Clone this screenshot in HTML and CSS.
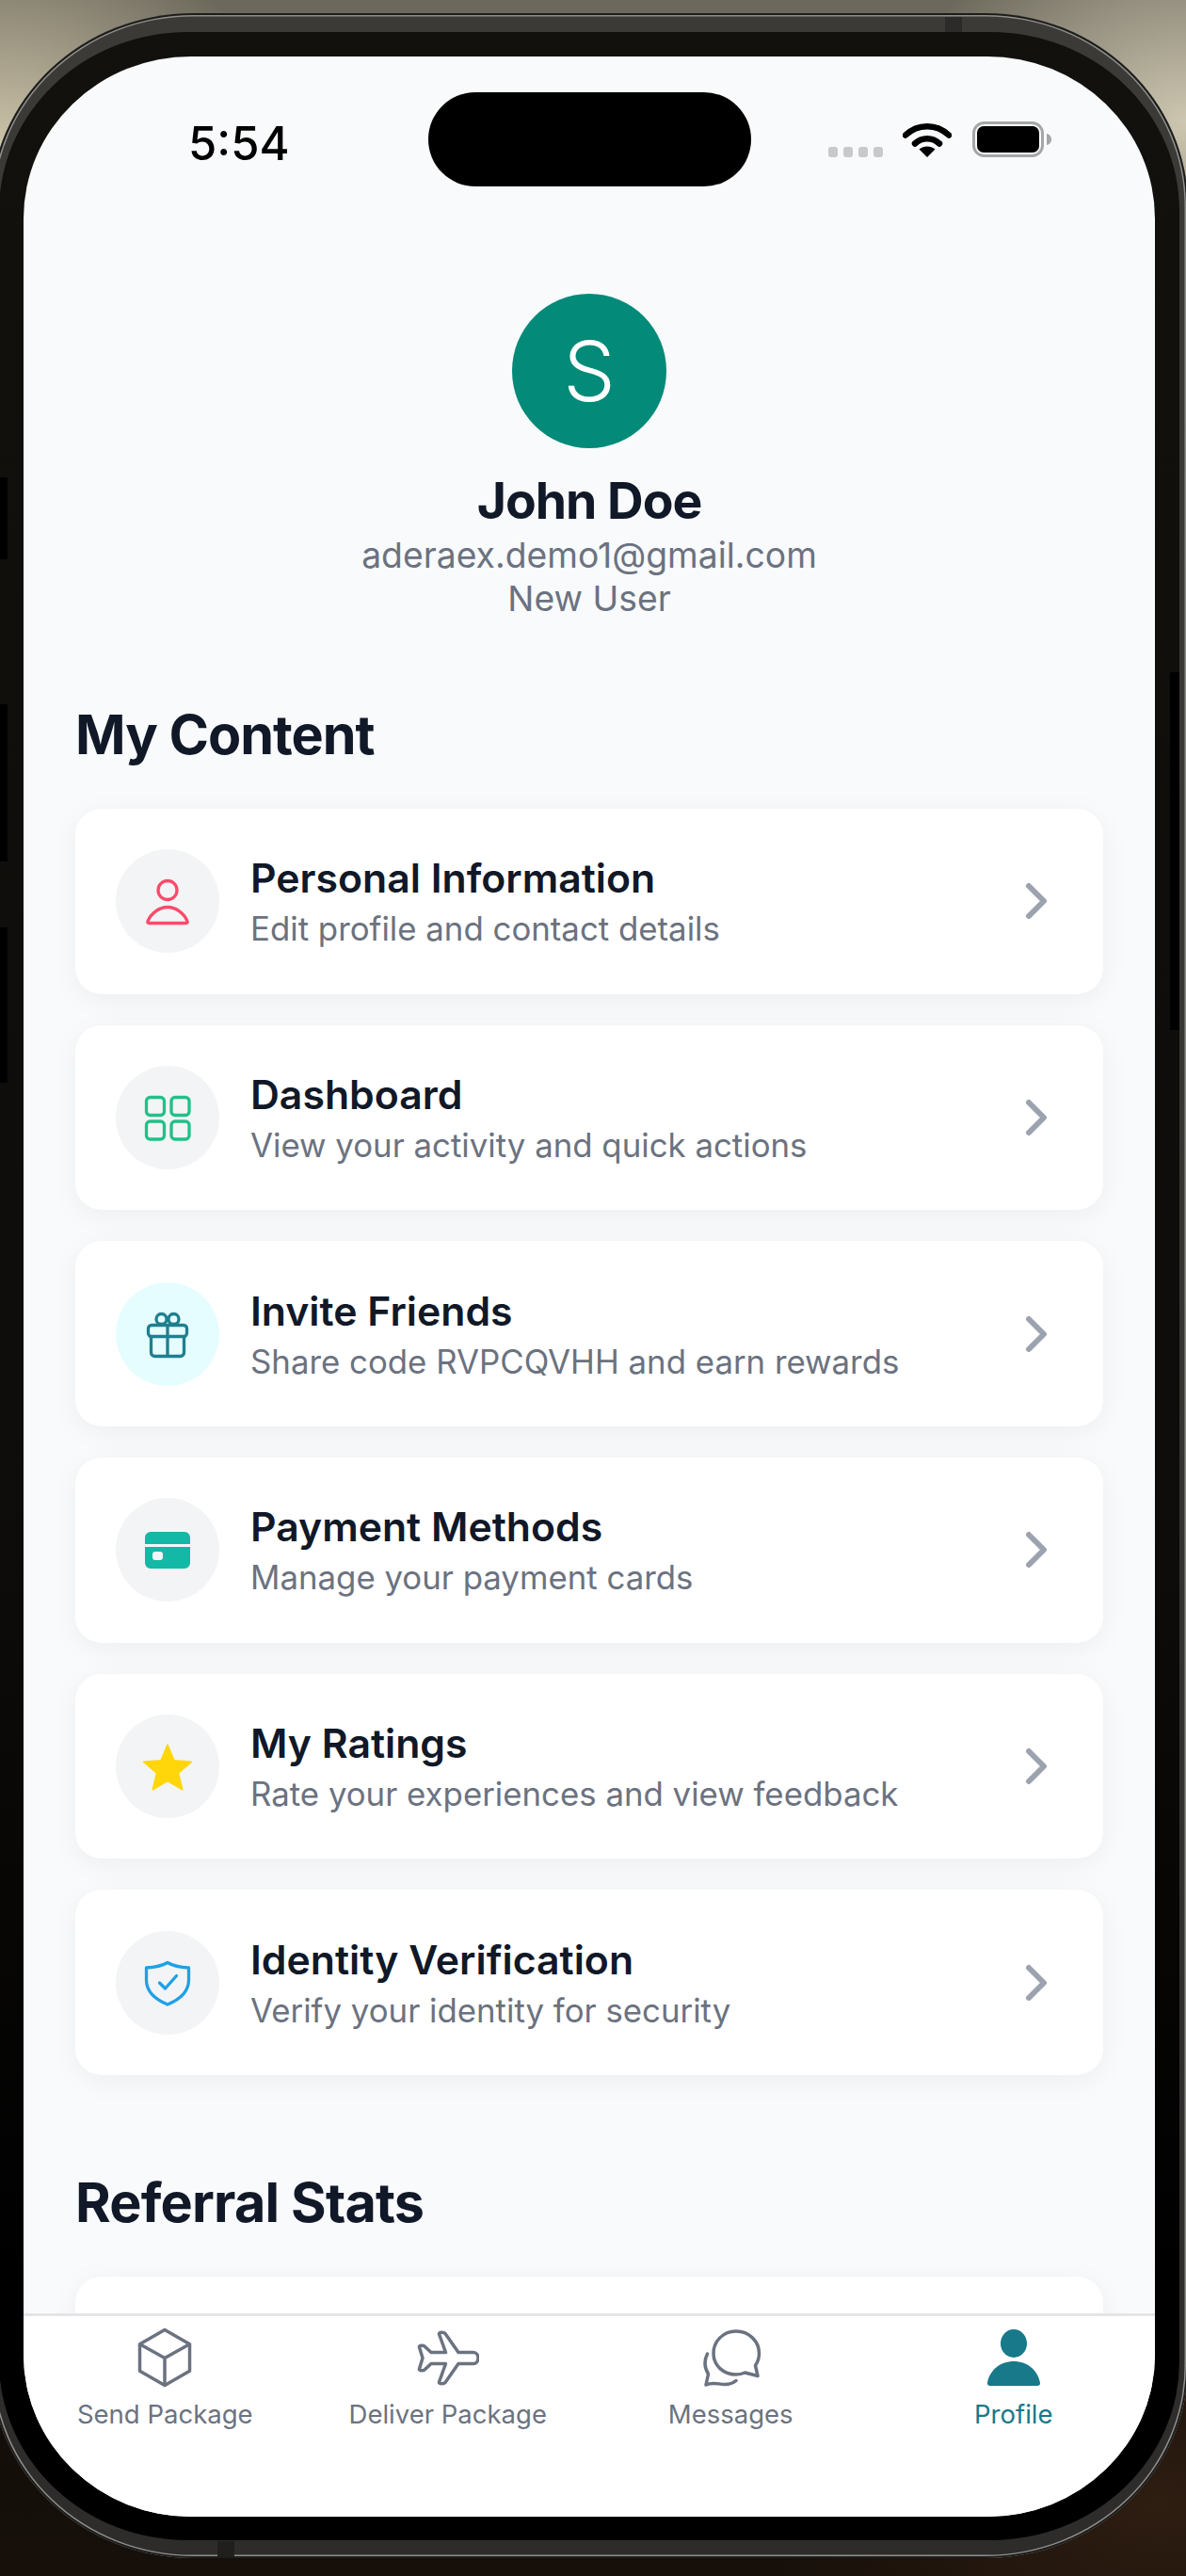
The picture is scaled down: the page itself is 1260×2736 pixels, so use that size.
FILE: index.html
```html
<!DOCTYPE html>
<html lang="en">
<head>
<meta charset="utf-8">
<title>Profile</title>
<link rel="stylesheet" href="styles.css">
</head>
<body>
<div class="stage">
  <div class="phone">
    <span class="tick tick-top"></span>
    <span class="tick tick-bottom"></span>
    <span class="btn btn-a"></span>
    <span class="btn btn-b"></span>
    <span class="btn btn-c"></span>
    <span class="btn btn-d"></span>
    <div class="bezel">
      <div class="screen">
        <div class="island"></div>
        <header class="status">
          <span class="time">5:54</span>
          <div class="status-right">
            <div class="dots"><i></i><i></i><i></i><i></i></div>
            <svg class="wifi" viewBox="0 0 52 38" width="52" height="38"><path d="M3 14.5C16 2 36 2 49 14.5" fill="none" stroke="#000" stroke-width="6.5" stroke-linecap="round"/><path d="M13 23.5C20.5 16.5 31.5 16.5 39 23.5" fill="none" stroke="#000" stroke-width="6.5" stroke-linecap="round"/><path d="M26 38l-8.500-8.500c5-4 12-4 17 0z" fill="#000"/></svg>
            <svg class="battery" viewBox="0 0 84 38" width="84" height="38"><rect x="1.500" y="1.500" width="73" height="35" rx="11" fill="none" stroke="#a6a6a6" stroke-width="3"/><rect x="5" y="5" width="66" height="28" rx="7" fill="#000"/><path d="M79 13c3 .5 5 3 5 6s-2 5.500-5 6z" fill="#a6a6a6"/></svg>
          </div>
        </header>
        <main class="scroll">
          <section class="profile">
            <div class="avatar">S</div>
            <h1 class="name">John Doe</h1>
            <p class="meta">aderaex.demo1@gmail.com</p>
            <p class="meta">New User</p>
          </section>
          <h2 class="section-title">My Content</h2>
          <div class="list">
            <article class="card">
              <div class="icon">
                <svg viewBox="0 0 66 66" width="66" height="66"><circle cx="33" cy="21.500" r="10" class="st st-rose"/><path d="M13.500 56.500h39c1.500 0 2-1 1.500-2.200C50.500 46 42 39.500 33 39.500S15.500 46 12 54.300c-.5 1.200 0 2.200 1.500 2.200z" class="st st-rose"/></svg>
              </div>
              <div class="text"><h3>Personal Information</h3><p>Edit profile and contact details</p></div>
              <svg class="chev" viewBox="0 0 24 40" width="24" height="40"><path d="M4 4l16 16L4 36"/></svg>
            </article>
            <article class="card">
              <div class="icon">
                <svg viewBox="0 0 66 66" width="66" height="66"><g class="st st-green"><rect x="10.500" y="11.500" width="19" height="19" rx="4"/><rect x="37" y="11.500" width="19" height="19" rx="4"/><rect x="10.500" y="37" width="19" height="19" rx="4"/><rect x="37" y="37" width="19" height="19" rx="4"/></g></svg>
              </div>
              <div class="text"><h3>Dashboard</h3><p>View your activity and quick actions</p></div>
              <svg class="chev" viewBox="0 0 24 40" width="24" height="40"><path d="M4 4l16 16L4 36"/></svg>
            </article>
            <article class="card">
              <div class="icon icon-cyan">
                <svg viewBox="0 0 66 66" width="66" height="66"><g class="st st-teal"><circle cx="26.500" cy="17" r="5.500"/><circle cx="39.500" cy="17" r="5.500"/><rect x="12.500" y="23.500" width="41" height="12" rx="3.500"/><path d="M15.500 35.500v17a4 4 0 0 0 4 4h27a4 4 0 0 0 4-4v-17M33 23.500v33"/></g></svg>
              </div>
              <div class="text"><h3>Invite Friends</h3><p>Share code RVPCQVHH and earn rewards</p></div>
              <svg class="chev" viewBox="0 0 24 40" width="24" height="40"><path d="M4 4l16 16L4 36"/></svg>
            </article>
            <article class="card">
              <div class="icon">
                <svg viewBox="0 0 66 66" width="66" height="66"><path d="M9 27v-7a6 6 0 0 1 6-6h36a6 6 0 0 1 6 6v7z" fill="#14b8a6"/><path fill-rule="evenodd" d="M9 30h48v17a6 6 0 0 1-6 6H15a6 6 0 0 1-6-6zM20 35a3 3 0 0 0-3 3v3a3 3 0 0 0 3 3h5a3 3 0 0 0 3-3v-3a3 3 0 0 0-3-3z" fill="#14b8a6"/></svg>
              </div>
              <div class="text"><h3>Payment Methods</h3><p>Manage your payment cards</p></div>
              <svg class="chev" viewBox="0 0 24 40" width="24" height="40"><path d="M4 4l16 16L4 36"/></svg>
            </article>
            <article class="card">
              <div class="icon">
                <svg viewBox="0 0 66 66" width="66" height="66"><path d="M33 10l7 16.700 18.500 1.500-14 12 4.300 17.600L33 48.500l-15.800 9.300 4.300-17.600-14-12L26 26.700z" fill="#ffd60a" stroke="#ffd60a" stroke-width="1.500" stroke-linejoin="round"/></svg>
              </div>
              <div class="text"><h3>My Ratings</h3><p>Rate your experiences and view feedback</p></div>
              <svg class="chev" viewBox="0 0 24 40" width="24" height="40"><path d="M4 4l16 16L4 36"/></svg>
            </article>
            <article class="card">
              <div class="icon">
                <svg viewBox="0 0 66 66" width="66" height="66"><g class="st st-blue"><path d="M33 11.500c6 3.500 13 5 22.500 5.500v13C55.500 43 45 51 33 56 21 51 10.500 43 10.500 30V17C20 16.500 27 15 33 11.500z"/><path d="M24.500 33l6 6 12-13.500"/></g></svg>
              </div>
              <div class="text"><h3>Identity Verification</h3><p>Verify your identity for security</p></div>
              <svg class="chev" viewBox="0 0 24 40" width="24" height="40"><path d="M4 4l16 16L4 36"/></svg>
            </article>
          </div>
          <h2 class="section-title section-title-2">Referral Stats</h2>
          <div class="card card-stub"></div>
        </main>
        <nav class="tabs">
          <a class="tab">
            <svg viewBox="0 0 66 66" width="66" height="66"><g class="st st-gray"><path d="M33 3.500l26.500 15.200v28.600L33 62.500 6.500 47.300V18.700z"/><path d="M7 19l26 14.500L59 19M33 33.500V62"/></g></svg>
            <span>Send Package</span>
          </a>
          <a class="tab">
            <svg viewBox="0 0 66 66" width="66" height="66"><path class="st st-gray" d="M60 27.500H44L30 7.500c-1-1.500-7-2-6.500.5l7 19.500H15L8 21c-1-1-6-1.500-5.500 1l3.500 11.500L2.500 45c-.5 2.500 4.500 2 5.500 1l7-6.500h15.500L23.500 59c-.5 2.500 5.500 2 6.500.5l14-20h16c3 0 5-3 5-6s-2-6-5-6z"/></svg>
            <span>Deliver Package</span>
          </a>
          <a class="tab">
            <svg viewBox="0 0 66 66" width="66" height="66"><g class="st st-gray"><path d="M39 5c-13.500 0-24 10.500-24 23.500S25.500 51 39 51c3.500 0 6.500-.7 9.500-2l13.500 3.500-2.500-11c2.500-3.800 4-8.300 4-13C63.500 15.500 52.500 5 39 5z"/><path d="M8.500 29c-3.500 7-3 15 1 21.500L7 62c8-3.500 13-.5 20-.5 5 0 9-1.500 12-4"/></g></svg>
            <span>Messages</span>
          </a>
          <a class="tab tab-active">
            <svg viewBox="0 0 66 66" width="66" height="66"><ellipse cx="33" cy="18" rx="14" ry="15" fill="#177989"/><path d="M8 63h50c2 0 3.500-1.200 3-3.200C58.500 46 47 37 33 37S7.500 46 5 59.800C4.500 61.800 6 63 8 63z" fill="#177989"/></svg>
            <span>Profile</span>
          </a>
        </nav>
      </div>
    </div>
  </div>
</div>
</body>
</html>
```
FILE: styles.css
```css
* { box-sizing: border-box; }
html, body { margin: 0; padding: 0; }
body { font-family: Inter, "Noto Sans", sans-serif; }

.stage {
  width: 1260px;
  height: 2736px;
  overflow: hidden;
  padding-top: 14px;
  background:
    radial-gradient(300px 230px at 0 150px, #cbc2a8, rgba(203,194,168,0)),
    radial-gradient(300px 230px at 1260px 130px, #cdc7b1, rgba(205,199,177,0)),
    radial-gradient(420px 260px at 1230px 2660px, #2e1d11, rgba(46,29,17,0)),
    linear-gradient(#6c685b 0, #6c685b 200px, #0c0a08 500px, #0c0a08 2300px, #17100a 2736px);
}

.phone {
  position: relative;
  width: 1272px;
  height: 2703px;
  margin-left: -10px;
  padding: 20px 9px 19px;
  border-radius: 215px / 205px;
  background: linear-gradient(#3b3a37, #3a3936 30%, #2d2c2a);
  box-shadow: inset 0 0 0 2px #1d1d1c, inset 0 0 0 3.5px #8f8f8c;
}
.tick { position: absolute; width: 18px; height: 16px; background: #2c2b29; }
.tick-top { left: 1014px; top: 4px; }
.tick-bottom { left: 241px; bottom: 2px; background: #201f1e; }
.btn { position: absolute; z-index: 2; width: 8px; background: #000; }
.btn-a { left: 10px; top: 493px; height: 87px; }
.btn-b { left: 10px; top: 734px; height: 167px; }
.btn-c { left: 10px; top: 971px; height: 165px; }
.btn-d { left: 1253px; top: 700px; height: 380px; width: 10px; }

.bezel {
  height: 100%;
  padding: 26px 26px 25px;
  border-radius: 200px / 190px;
  background: linear-gradient(#12110e, #0e0c0a 60%, #000 90%);
}

.screen {
  position: relative;
  height: 100%;
  display: flex;
  flex-direction: column;
  overflow: hidden;
  border-radius: 178px / 172px;
  background: #f8fafc;
}
.island {
  position: absolute;
  z-index: 3;
  left: 430px;
  top: 38px;
  width: 343px;
  height: 100px;
  border-radius: 50px;
  background: #000;
}

.status {
  flex: none;
  height: 138px;
  display: flex;
  justify-content: space-between;
  align-items: flex-start;
  padding: 69px 110px 0 175px;
}
.time {
  font-size: 49px;
  line-height: 48px;
  font-weight: 500;
  color: #000;
}
.status-right { display: flex; align-items: flex-end; }
.dots { display: flex; gap: 6px; margin-right: 21px; }
.dots i { width: 10px; height: 11px; border-radius: 3px; background: #c9c9c9; }
.wifi { display: block; margin-right: 22px; }
.battery { display: block; }

.scroll {
  flex: 1;
  min-height: 0;
  overflow: hidden;
  padding: 0 55px;
}
.profile { display: flex; flex-direction: column; align-items: center; padding-top: 114px; }
.avatar {
  width: 164px;
  height: 164px;
  border-radius: 50%;
  background: #038a78;
  color: #fff;
  font-size: 88px;
  font-weight: 350;
  line-height: 164px;
  text-align: center;
}
.name {
  margin: 24px 0 3px;
  font-size: 53.500px;
  line-height: 64px;
  font-weight: 700;
  letter-spacing: -1px;
  color: #111827;
}
.meta {
  margin: 0;
  font-size: 37.300px;
  line-height: 46px;
  color: #6b7280;
}
.section-title {
  margin: 86px 0 44px;
  font-size: 57.500px;
  line-height: 70px;
  font-weight: 700;
  letter-spacing: -1px;
  color: #111827;
}
.section-title-2 { margin: 100px 0 44px; letter-spacing: -0.8px; }
.list { display: flex; flex-direction: column; gap: 33px; }
.card {
  display: flex;
  align-items: center;
  height: 196.700px;
  padding: 0 59px 0 43px;
  border-radius: 28px;
  background: #fff;
  box-shadow: 0 6px 30px rgba(0, 0, 0, 0.05);
}
.card-stub { height: 160px; }
.icon {
  flex: none;
  width: 110px;
  height: 110px;
  display: flex;
  align-items: center;
  justify-content: center;
  border-radius: 50%;
  background: #f3f4f6;
}
.icon-cyan { background: #e6fdff; }
.icon svg { display: block; }
.text { flex: 1; min-width: 0; margin-left: 33px; padding-top: 5px; }
.text h3 {
  margin: 0;
  font-size: 42.750px;
  line-height: 52px;
  font-weight: 600;
  color: #111827;
}
.text p {
  margin: 1px 0 0;
  font-size: 34.800px;
  line-height: 52px;
  color: #6b7280;
}
.chev { flex: none; display: block; fill: none; stroke: #9ca3af; stroke-width: 6; stroke-linecap: round; stroke-linejoin: round; }

.st { fill: none; stroke-linecap: round; stroke-linejoin: round; stroke-width: 3.300; }
.st-rose { stroke: #fb4a6b; }
.st-green { stroke: #22c088; }
.st-teal { stroke: #1f7f8f; }
.st-blue { stroke: #1da1e8; }
.st-gray { stroke: #6b7280; stroke-width: 3.500; }

.tabs {
  flex: none;
  height: 216px;
  display: grid;
  grid-template-columns: repeat(4, 1fr);
  border-top: 3px solid #e5e5e5;
  background: #fff;
}
.tab {
  display: flex;
  flex-direction: column;
  align-items: center;
  padding-top: 11px;
  font-size: 27.500px;
  line-height: 38px;
  color: #6b7280;
}
.tab svg { display: block; margin-bottom: 8px; }
.tab-active { color: #177989; }
```
